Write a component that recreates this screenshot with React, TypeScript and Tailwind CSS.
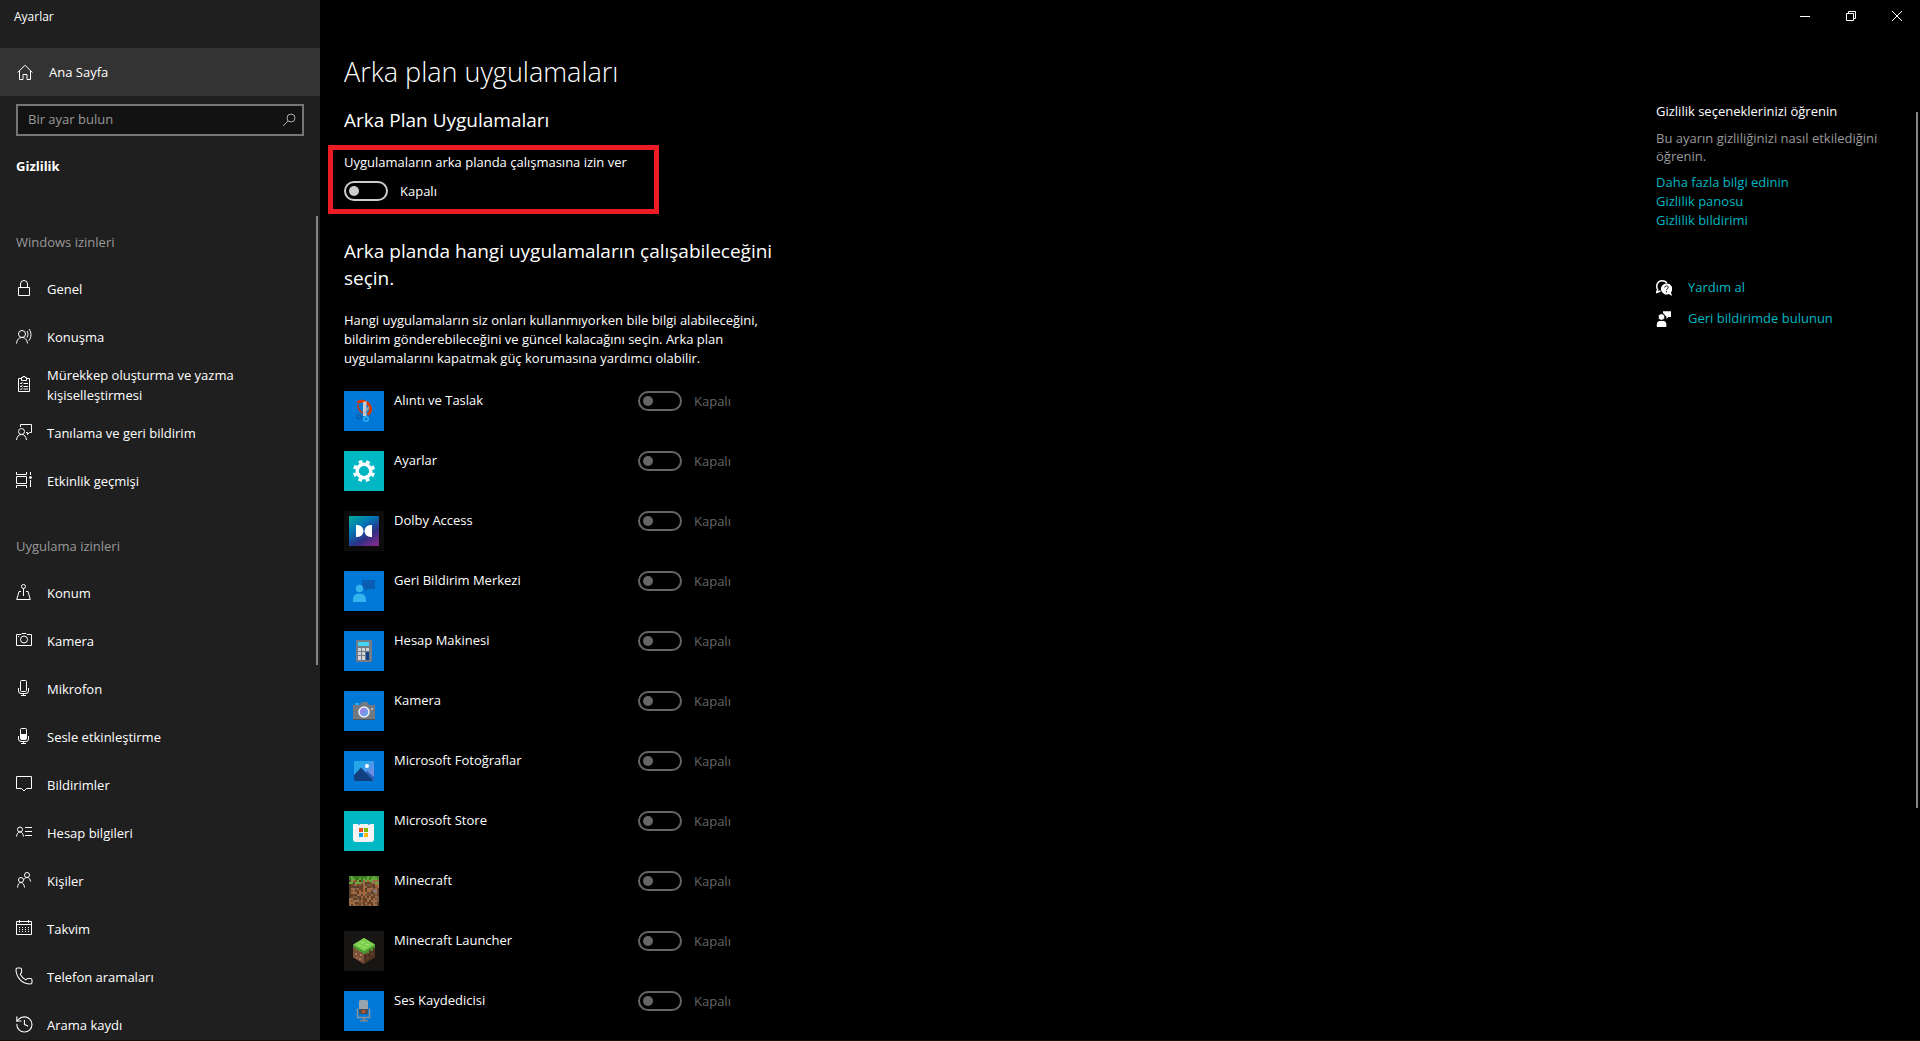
import React, {useState} from "react";
import {History, Phone} from "lucide-react";

type IconProps = { children: React.ReactNode }

const Icon: React.FC<IconProps> = ({children}) => (
    <svg className="h-4 w-4 shrink-0" viewBox="0 0 16 16" fill="none" stroke="currentColor" aria-hidden="true">
        {children}
    </svg>
)

const windowsPermissions = [
    {
        name: "Genel",
        icon: <Icon><path d="M2.500 7.500h11v8h-11zM4.500 7.500V4a3.500 3.500 0 0 1 7 0v3.500"/></Icon>
    },
    {
        name: "Konuşma",
        icon: <Icon><circle cx="6" cy="6" r="3.500"/><path d="M.5 15.500C1 11.500 3 9.500 6 9.500s5 2 5.500 6M11 3c1.300 2 1.300 4.500 0 6.500M13 1c2.600 3.500 2.600 8 0 11.500"/></Icon>
    },
    {
        name: "Mürekkep oluşturma ve yazma kişiselleştirmesi",
        icon: <Icon><path d="M5 2.500H2.500v13h11v-13H11M5.500 4.500v-3h1.500V.5h2v1h1.500v3zM7.500 7.500H12M7.500 10.500H12M7.500 13H12M4 7l1 1 1.500-2M4 10l1 1 1.500-2M4 12.700l1 1 1.500-2"/></Icon>
    },
    {
        name: "Tanılama ve geri bildirim",
        icon: <Icon><circle cx="5.500" cy="7.500" r="3"/><path d="M.5 16c.5-3.500 2-5.500 5-5.500s4.500 2 5 5.500M4.500 3V.5h11v8h-2L11.500 10.500V8.500H10"/></Icon>
    },
    {
        name: "Etkinlik geçmişi",
        icon: <Icon><path d="M.5 0v2.500h10V0M.5 16v-2.500h10V16M.5 4.500h10v7H.5zM14.500 0v3M14.500 8v7"/><circle cx="14.500" cy="5.500" r="1" fill="currentColor"/></Icon>
    },
]

const appPermissions = [
    {
        name: "Konum",
        icon: <Icon><circle cx="7.500" cy="2.500" r="2"/><path d="M7.500 4.500V12M5 7.500H3L.7 15.500h13.600L12 7.500h-2"/></Icon>
    },
    {
        name: "Kamera",
        icon: <Icon><path d="M.5 2.500H5l1-1h4l1 1h4.500v11H.5z"/><circle cx="8" cy="7.500" r="3.500"/><path d="M2 4.500h1"/></Icon>
    },
    {
        name: "Mikrofon",
        icon: <Icon><rect x="4.500" y=".5" width="6" height="11" rx="1"/><path d="M2.500 8v3q0 2.500 2.500 2.500h5q2.500 0 2.500-2.500V8M7.500 13.500v2M5 15.500h5"/></Icon>
    },
    {
        name: "Sesle etkinleştirme",
        icon: <Icon><rect x="4.500" y=".5" width="6" height="11" rx="1"/><path d="M5 6.500h5v4.500H5z" fill="currentColor"/><path d="M2.500 8v3q0 2.500 2.500 2.500h5q2.500 0 2.500-2.500V8M7.500 13.500v2M5 15.500h5"/></Icon>
    },
    {
        name: "Bildirimler",
        icon: <Icon><path d="M.5.5h15v12H10.500L8 15l-2.500-2.500H.5z"/></Icon>
    },
    {
        name: "Hesap bilgileri",
        icon: <Icon><circle cx="4" cy="5.500" r="2.500"/><path d="M.5 12.500C1 9.500 2 8 4 8s3 1.500 3.500 4.500M9 3.500h7M9 7.500h7M9 11.500h7"/></Icon>
    },
    {
        name: "Kişiler",
        icon: <Icon><circle cx="11" cy="3" r="2.500"/><circle cx="5" cy="8" r="2.500"/><path d="M8 7.500c.7-1.500 1.700-2 3-2 2 0 3.200 1.500 3.500 4M1.500 15.500c.3-3 1.500-5 3.500-5s3.200 2 3.500 5"/></Icon>
    },
    {
        name: "Takvim",
        icon: <Icon><path d="M.5 1.500h15v13H.5zM.5 4.500h15M3.500 0v3M12.500 0v3"/><path d="M3 7.500h10M3 9.500h10M3 11.500h10" strokeDasharray="1 2"/></Icon>
    },
    {
        name: "Telefon aramaları",
        icon: <Phone className="h-4 w-4 shrink-0 overflow-visible" viewBox="2 2 20 20" strokeWidth={1.300}/>
    },
    {
        name: "Arama kaydı",
        icon: <History className="h-4 w-4 shrink-0 overflow-visible" viewBox="2 2 19 19" strokeWidth={1.300}/>
    },
]

type TileProps = { color: string, children: React.ReactNode }

const Tile: React.FC<TileProps> = ({color, children}) => (
    <svg className="h-10 w-10 shrink-0" viewBox="0 0 40 40" aria-hidden="true">
        <rect width="40" height="40" fill={color}/>
        {children}
    </svg>
)

const blue = "#0078d7"
const teal = "#00b7c3"
const soil = ["#79553a", "#593d29", "#966c4a", "#a8683c", "#6b4228"]
const grass = ["#4c8a2a", "#3b7a1e", "#67a83c"]

// grass block face, 15 x 15 cells of 2px
const grassBlock = Array.from({length: 225}, (_, i) => {
    const x = i % 15
    const y = Math.floor(i / 15)
    const seed = (x * 37 + y * 91 + x * y * 13 + x * x * 7) % 101
    const isGrass = y < 2 + (seed % 3)
    const fill = isGrass ? grass[seed % 3] : seed === 50 ? "#80808a" : soil[seed % 5]
    return <rect key={i} x={5 + x * 2} y={5 + y * 2} width="2" height="2" fill={fill}/>
})

const apps = [
    {
        name: "Alıntı ve Taslak",
        tile: <Tile color={blue}>
            <path d="M13.500 11.500c5-2.500 10-.5 12 3 2 3.500 1.500 7-2 9" fill="none" stroke="#d83b01" strokeWidth="3"/>
            <path d="M14 13c-.5 3.500 1 7 5 9" fill="none" stroke="#c23a0c" strokeWidth="1.500"/>
            <path d="M19 11l3.500-1v15H19z" fill="#c8ccd0"/>
            <path d="M22.500 17.500L25 15v3l-6 6z" fill="#9aa3ab"/>
            <circle cx="15" cy="25.500" r="2" fill="none" stroke="#0f5ca8" strokeWidth="1.500"/>
            <circle cx="22" cy="28" r="2.300" fill="none" stroke="#2fb0f0" strokeWidth="1.500"/>
        </Tile>
    },
    {
        name: "Ayarlar",
        tile: <Tile color={teal}>
            <circle cx="20" cy="20" r="6.800" fill="none" stroke="#fff" strokeWidth="3.400"/>
            <circle cx="20" cy="20" r="9.600" fill="none" stroke="#fff" strokeWidth="3" strokeDasharray="3.770 3.770" strokeDashoffset="-1.880"/>
        </Tile>
    },
    {
        name: "Dolby Access",
        tile: <Tile color="#0c0c0c">
            <defs>
                <linearGradient id="dolby" x1="0.100" y1="0" x2="0.800" y2="1">
                    <stop offset="0" stopColor="#00a69c"/>
                    <stop offset=".35" stopColor="#0077b6"/>
                    <stop offset=".7" stopColor="#2e2f86"/>
                    <stop offset="1" stopColor="#7b2a8b"/>
                </linearGradient>
            </defs>
            <rect x="5" y="5" width="30" height="30" fill="url(#dolby)"/>
            <path d="M12 14h1.500a6 6 0 0 1 0 12H12zM28 14h-1.500a6 6 0 0 0 0 12H28z" fill="#fff"/>
        </Tile>
    },
    {
        name: "Geri Bildirim Merkezi",
        tile: <Tile color={blue}>
            <path d="M18 9h13v9h-7.500L21 20.500V18h-3z" fill="#0a5fb4"/>
            <circle cx="15.500" cy="17.500" r="3.700" fill="#32b4ee"/>
            <path d="M9 31v-2.500q0-6 6.500-6t6.500 6V31z" fill="#32b4ee"/>
        </Tile>
    },
    {
        name: "Hesap Makinesi",
        tile: <Tile color={blue}>
            <rect x="12" y="9" width="16" height="22" rx="1" fill="#737b84"/>
            <rect x="14" y="11" width="11" height="4" fill="#45d3f5"/>
            <path d="M14 17h3v3h-3zM18 17h3v3h-3zM22 17h3v3h-3zM14 21h3v3h-3zM18 21h3v3h-3zM14 25h3v4h-3zM18 25h3v4h-3z" fill="#d0d4d8"/>
            <path d="M22 21h3v8h-3z" fill="#0f3f86"/>
        </Tile>
    },
    {
        name: "Kamera",
        tile: <Tile color={blue}>
            <defs>
                <linearGradient id="lens" x1="0" y1="0" x2="1" y2="1">
                    <stop offset="0" stopColor="#c06be0"/>
                    <stop offset="1" stopColor="#3fb8f0"/>
                </linearGradient>
            </defs>
            <path d="M11 12h4v2h-4z" fill="#2fa8f0"/>
            <path d="M9 14h7l1.500-3h6l1.500 3h6v15H9z" fill="#737980"/>
            <path d="M9 28h22v1H9z" fill="#50565c"/>
            <circle cx="20" cy="21" r="5" fill="url(#lens)" stroke="#f0f0f4" strokeWidth="1.500"/>
            <circle cx="28" cy="18" r="1" fill="#c8ccd0"/>
        </Tile>
    },
    {
        name: "Microsoft Fotoğraflar",
        tile: <Tile color={blue}>
            <defs>
                <linearGradient id="sky" x1="0" y1="0" x2="1" y2="1">
                    <stop offset=".3" stopColor="#25a6ea"/>
                    <stop offset="1" stopColor="#9a7fe0"/>
                </linearGradient>
            </defs>
            <rect x="10" y="10" width="20" height="20" rx="1" fill="url(#sky)"/>
            <path d="M20 23l3-3 7 6v3.500H20z" fill="#2a5fb8"/>
            <path d="M10 24l7-7.500L29.500 30H11q-1 0-1-1z" fill="#123f80"/>
            <circle cx="23" cy="15" r="2" fill="#fff"/>
        </Tile>
    },
    {
        name: "Microsoft Store",
        tile: <Tile color={teal}>
            <path d="M9 13h21v15q0 3-3 3H12q-3 0-3-3z" fill="#f4f4f4"/>
            <path d="M15 14v-3.500h10V14" fill="none" stroke="#1ba1f2" strokeWidth="1.500"/>
            <path d="M15 17h4v4h-4z" fill="#f25022"/>
            <path d="M20 17h4v4h-4z" fill="#7fba00"/>
            <path d="M15 22h4v4h-4z" fill="#00a4ef"/>
            <path d="M20 22h4v4h-4z" fill="#ffb900"/>
        </Tile>
    },
    {
        name: "Minecraft",
        tile: <Tile color="#000">{grassBlock}</Tile>
    },
    {
        name: "Minecraft Launcher",
        tile: <Tile color="#171615">
            <path d="M9 14l11 6v13L9 26.500z" fill="#7c4f38"/>
            <path d="M31 14l-11 6v13l11-6.500z" fill="#4e3020"/>
            <path d="M11 22h2v2h-2zM15 27h2v2h-2zM16 23h2v2h-2zM12 26h2v1h-2z" fill="#a8795c"/>
            <path d="M23 26h2v2h-2zM27 22h2v2h-2zM22 22h2v2h-2z" fill="#6e452e"/>
            <path d="M20 7l11 6.500v4l-2-1v3l-2 1v-2l-2 1v3l-2-1-3 2-2-2v-1l-2 1-2-3-2 1-1-3-2 0v-2z" fill="#4f9a30"/>
            <path d="M20 7l11 6.500-11 6.500-11-6.500z" fill="#7fd050"/>
            <path d="M17 11h3v1h-3zM22 13h3v1h-3zM14 14h3v1h-3zM19 16h3v1h-3z" fill="#a0e874"/>
        </Tile>
    },
    {
        name: "Ses Kaydedicisi",
        tile: <Tile color={blue}>
            <rect x="15" y="9" width="9" height="14" rx="1.500" fill="#9aa4ae"/>
            <path d="M13.500 17.500v9h12v-9" fill="none" stroke="#8a949e" strokeWidth="1.500"/>
            <path d="M15 18h9v5h-9z" fill="#4c4f56"/>
            <circle cx="19.500" cy="20.500" r="1.500" fill="#e8501c"/>
            <path d="M18.500 27h2.500v2h-2.500zM16 29h8v1.500h-8z" fill="#7c8690"/>
        </Tile>
    },
]

type ToggleProps = { id: string, disabled?: boolean }

const Toggle: React.FC<ToggleProps> = ({id, disabled}) => {

    const [checked, setChecked] = useState(false)

    return (
        <div className={"flex h-5 items-center gap-3 " + (disabled ? "text-[#666666]" : "text-white")}>
            <span className={"flex " + (disabled ? "text-[#666666]" : "text-[#cccccc]")}>
                <input type="checkbox" role="switch" id={id} disabled={disabled} checked={checked}
                       onChange={(e) => setChecked(e.target.checked)}
                       className="flex h-5 w-11 appearance-none items-center rounded-full border-2 border-current px-[3px] before:h-[10px] before:w-[10px] before:rounded-full before:bg-current checked:justify-end"/>
            </span>
            <span className="pt-[2px]">{checked ? "Açık" : "Kapalı"}</span>
        </div>
    )
}

type NavItemProps = { name: string, icon: React.ReactNode }

const NavItem: React.FC<NavItemProps> = ({name, icon}) => (
    <li>
        <a href="#" className="flex h-12 items-center gap-[15px] pr-16 pl-4 leading-5 hover:bg-[#333333]">
            {icon}
            <span className="pt-[2px]">{name}</span>
        </a>
    </li>
)

const Sidebar: React.FC = () => (
    <aside className="flex w-80 shrink-0 flex-col bg-[#1f1f1f]">
        <div className="flex h-12 shrink-0 px-[14px] pt-2 text-[12px] leading-[18px]">Ayarlar</div>
        <a href="#" className="flex h-12 shrink-0 items-center gap-4 bg-[#333333] px-[17px]">
            <Icon><path d="M.7 8.500L8 1.200l7.300 7.300M2.500 7v8.500h3.500v-5h4v5h3.500V7"/></Icon>
            <span className="pt-[2px]">Ana Sayfa</span>
        </a>
        <div className="mx-4 mt-2 flex h-8 shrink-0 items-center border-2 border-[#767676] bg-[#121212] pr-[6px] pl-[10px]">
            <input type="text" aria-label="Bir ayar bulun" placeholder="Bir ayar bulun"
                   className="min-w-0 grow bg-transparent outline-none placeholder:text-[#999999]"/>
            <button type="button" aria-label="Ara" className="text-[#aaaaaa]">
                <svg className="h-[14px] w-[14px]" viewBox="0 0 14 14" fill="none" stroke="currentColor">
                    <circle cx="9" cy="5" r="4"/>
                    <path d="M6 8L1 13"/>
                </svg>
            </button>
        </div>
        <h2 className="mt-5 px-4 font-bold leading-5">Gizlilik</h2>
        <div className="mt-10 flex min-h-0 grow">
            <nav className="grow overflow-hidden">
                <h3 className="px-4 pt-4 pb-3 leading-5 text-[#999999]">Windows izinleri</h3>
                <ul>
                    {windowsPermissions.map((item) => <NavItem key={item.name} {...item}/>)}
                </ul>
                <h3 className="px-4 pt-8 pb-3 leading-5 text-[#999999]">Uygulama izinleri</h3>
                <ul>
                    {appPermissions.map((item) => <NavItem key={item.name} {...item}/>)}
                </ul>
            </nav>
            <div className="mr-[2px] h-6/11 w-[2px] shrink-0 bg-[#858585]"/>
        </div>
    </aside>
)

const WindowButtons: React.FC = () => (
    <div className="flex h-8 shrink-0 justify-end">
        <button type="button" aria-label="Simge durumuna küçült" className="flex w-[46px] items-center justify-center">
            <svg className="h-[10px] w-[10px]" viewBox="0 0 10 10" stroke="currentColor"><path d="M0 5.500h10"/></svg>
        </button>
        <button type="button" aria-label="Önceki boyut" className="flex w-[46px] items-center justify-center">
            <svg className="h-[10px] w-[10px]" viewBox="0 0 10 10" fill="none" stroke="currentColor">
                <path d="M.5 2.500h7v7h-7zM2.500 2.500v-2h7v7h-2"/>
            </svg>
        </button>
        <button type="button" aria-label="Kapat" className="flex w-[46px] items-center justify-center">
            <svg className="h-[10px] w-[10px]" viewBox="0 0 10 10" stroke="currentColor"><path d="M0 0l10 10M10 0L0 10"/></svg>
        </button>
    </div>
)

const HelpPanel: React.FC = () => (
    <section className="w-60 shrink-0 pt-[69px]">
        <h3 className="leading-5">Gizlilik seçeneklerinizi öğrenin</h3>
        <p className="mt-2 leading-[18px] text-[#999999]">Bu ayarın gizliliğinizi nasıl etkilediğini öğrenin.</p>
        <div className="mt-2 flex flex-col items-start leading-[19px] text-[#00b7c3]">
            <a href="#">Daha fazla bilgi edinin</a>
            <a href="#">Gizlilik panosu</a>
            <a href="#">Gizlilik bildirimi</a>
        </div>
        <div className="mt-12 flex flex-col gap-3 leading-[19px]">
            <a href="#" className="flex items-center gap-4">
                <Icon>
                    <path d="M1.500 9.500C-.5 5 2 .8 6 .8c2.500 0 4 1 4.800 2.400M2 9L.5 12.500 4.500 11" strokeWidth="1.500"/>
                    <path d="M10.500 3.500a5.500 5.500 0 1 0 2.300 10.500l3.200 2-1-3.500a5.500 5.500 0 0 0-4.500-9z" fill="currentColor" stroke="none"/>
                    <path d="M8.800 7.500c0-2.200 3.400-2.200 3.400 0 0 1.300-1.700 1.200-1.700 2.700M10.500 11.200v1.200" stroke="#000"/>
                </Icon>
                <span className="text-[#00b7c3]">Yardım al</span>
            </a>
            <a href="#" className="flex items-center gap-4">
                <Icon>
                    <path d="M7 .2h8v5.800h-2.500L10.500 8V6L7 2z" fill="currentColor" stroke="none"/>
                    <circle cx="5.500" cy="6" r="3.300" fill="currentColor" stroke="#000" strokeWidth=".8"/>
                    <path d="M.8 16v-2.500q0-3.500 3-3.500h3.500q3 0 3 3.500V16z" fill="currentColor" stroke="none"/>
                </Icon>
                <span className="text-[#00b7c3]">Geri bildirimde bulunun</span>
            </a>
        </div>
    </section>
)

export default function App() {
    return (
        <div className="flex h-screen overflow-hidden border-b border-[#141212] bg-black font-['Open_Sans','Noto_Sans',sans-serif] text-[13px] text-white">
            <Sidebar/>
            <main className="flex min-w-0 grow flex-col">
                <WindowButtons/>
                <div className="flex min-h-0 grow">
                    <div className="grow overflow-hidden pl-2">
                        <h1 className="mt-5 pl-4 text-[27px] font-light leading-10">Arka plan uygulamaları</h1>
                        <h2 className="mt-[14px] pl-4 text-[19px] leading-7">Arka Plan Uygulamaları</h2>
                        <div className="mt-[11px] h-[69px] w-[331px] border-[5px] border-[#ed1c24] px-[11px] pt-[2px]">
                            <label htmlFor="background" className="block leading-5">Uygulamaların arka planda çalışmasına izin ver</label>
                            <div className="mt-[9px]"><Toggle id="background"/></div>
                        </div>
                        <div className="w-[450px] pl-4">
                            <h2 className="mt-6 text-[19px] leading-[27px]">Arka planda hangi uygulamaların çalışabileceğini seçin.</h2>
                            <p className="mt-[19px] leading-[19px]">Hangi uygulamaların siz onları kullanmıyorken bile bilgi alabileceğini, bildirim gönderebileceğini ve güncel kalacağını seçin. Arka plan uygulamalarını kapatmak güç korumasına yardımcı olabilir.</p>
                        </div>
                        <ul className="mt-[23px] flex flex-col gap-5 pl-4">
                            {apps.map((app, i) => (
                                <li key={app.name} className="flex h-10 items-start">
                                    {app.tile}
                                    <label htmlFor={"app-" + i} className="w-[254px] shrink-0 pl-[10px] leading-[18px]">{app.name}</label>
                                    <Toggle id={"app-" + i} disabled/>
                                </li>
                            ))}
                        </ul>
                    </div>
                    <HelpPanel/>
                    <div className="mt-20 mr-[2px] ml-5 h-[69%] w-[2px] shrink-0 bg-[#858585]"/>
                </div>
            </main>
        </div>
    )
}
